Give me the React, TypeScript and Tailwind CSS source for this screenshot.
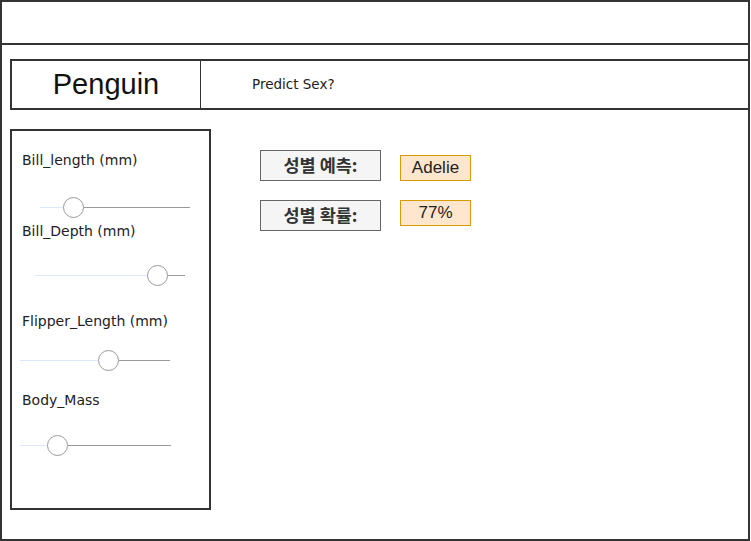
import React from 'react';

const sliders = [
  { label: 'Bill_length (mm)', labelGap: 'mt-[21px]', sliderGap: 'mt-[28px]', offset: 28, left: 23, right: 106 },
  { label: 'Bill_Depth (mm)', labelGap: 'mt-[5px]', sliderGap: 'mt-[25px]', offset: 23, left: 112, right: 17 },
  { label: 'Flipper_Length (mm)', labelGap: 'mt-[27px]', sliderGap: 'mt-[20px]', offset: 8, left: 78, right: 51 },
  { label: 'Body_Mass', labelGap: 'mt-[21px]', sliderGap: 'mt-[26px]', offset: 8, left: 27, right: 103 },
];

const Slider: React.FC<{ offset: number; left: number; right: number }> = ({ offset, left, right }) => (
  <div className="flex items-center h-[21px]" style={{ marginLeft: offset }}>
    <div className="h-px bg-[#dae8fc]" style={{ width: left }} />
    <div className="w-[21px] h-[21px] rounded-full border border-[#999] bg-white shrink-0" />
    <div className="h-px bg-[#999]" style={{ width: right }} />
  </div>
);

const ResultRow: React.FC<{ label: string; value: string; top: string; valueTop: string }> = ({ label, value, top, valueTop }) => (
  <div className={`flex items-start ${top}`}>
    <div className="w-[121px] h-[31px] border border-[#666] bg-[#f5f5f5] flex items-center justify-center pb-[1px] font-bold text-[17.5px] text-[#333] font-['Noto_Sans_CJK_KR',sans-serif]">
      {label}
    </div>
    <div className={`ml-[19px] w-[71px] h-[26px] border border-[#d79b00] bg-[#ffe6cc] flex items-center justify-center text-[17px] text-[#222] font-['Liberation_Sans',Arial,sans-serif] ${valueTop}`}>
      {value}
    </div>
  </div>
);

export default function App() {
  return (
    <div className="w-[751px] h-[541px] overflow-hidden bg-white font-['DejaVu_Sans',sans-serif] text-[#222]">
      <div className="w-[750px] h-[541px] border-2 border-[#333] flex flex-col">
        <div className="h-[43px] border-b-2 border-[#333] shrink-0" />
        <div className="flex mt-[14px] ml-[8px] h-[51px] border-2 border-r-0 border-[#333] -mr-[2px]">
          <div className="w-[189px] border-r border-[#333] flex items-center justify-center text-[29px] text-[#111] font-['Liberation_Sans',Arial,sans-serif]">
            Penguin
          </div>
          <div className="ml-[51px] flex items-center text-[13.5px] text-[#222] pb-[1px]">Predict Sex?</div>
        </div>
        <div className="flex mt-[19px] ml-[8px]">
          <div className="w-[201px] h-[381px] border-2 border-[#333] flex flex-col">
            {sliders.map((s) => (
              <React.Fragment key={s.label}>
                <div className={`${s.labelGap} ml-[10px] text-[14px] leading-[17px] text-[#222]`}>{s.label}</div>
                <div className={s.sliderGap}>
                  <Slider offset={s.offset} left={s.left} right={s.right} />
                </div>
              </React.Fragment>
            ))}
          </div>
          <div className="ml-[49px] flex flex-col">
            <ResultRow label="성별 예측:" value="Adelie" top="mt-[21px]" valueTop="mt-[5px]" />
            <ResultRow label="성별 확률:" value="77%" top="mt-[19px]" valueTop="mt-0" />
          </div>
        </div>
      </div>
    </div>
  );
}
